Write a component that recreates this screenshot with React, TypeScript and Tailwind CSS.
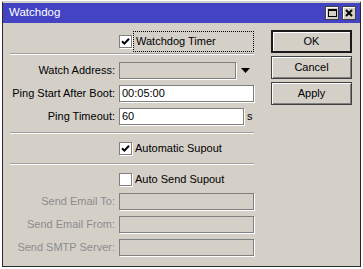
import React from "react";

const font = { fontFamily: '"Liberation Sans", Arial, sans-serif' };

function Check({ checked }: { checked: boolean }) {
  return (
    <div className="w-[13px] h-[13px] bg-white border border-[#808080] shadow-[1px_1px_0_#ffffff] flex items-center justify-center shrink-0">
      {checked && (
        <svg width="9" height="9" viewBox="0 0 9 9">
          <path d="M1 4.2 L3.4 6.6 L8 1.8" stroke="#000" strokeWidth="2" fill="none" />
        </svg>
      )}
    </div>
  );
}

function Separator({ className }: { className: string }) {
  return (
    <div className={"w-[244px] " + className}>
      <div className="h-px bg-[#a0a0a0]" />
      <div className="h-px bg-white" />
    </div>
  );
}

function Field({
  label,
  value,
  disabled,
  greyBox,
  className,
  boxWidth = "w-[135px]",
  after,
}: {
  label: string;
  value?: string;
  disabled?: boolean;
  greyBox?: boolean;
  className: string;
  boxWidth?: string;
  after?: React.ReactNode;
}) {
  return (
    <div className={"flex items-center h-[17px] " + className}>
      <div className={"w-[105px] text-right text-[11px] leading-none " + (disabled ? "text-[#8c8c8c]" : "text-black")}>
        {label}
      </div>
      <div className="w-[4px]" />
      <div
        className={
          boxWidth +
          " h-[17px] border border-[#808080] shadow-[1px_1px_0_#ffffff] flex items-center px-[2px] text-[11px] leading-none " +
          (disabled || greyBox ? "bg-[#d4d0c8]" : "bg-white")
        }
      >
        {value}
      </div>
      {after}
    </div>
  );
}

function Button({ label, primary, className }: { label: string; primary?: boolean; className: string }) {
  return (
    <div
      className={
        "w-[81px] h-[23px] flex items-center justify-center text-[11px] leading-none text-black bg-[#d4d0c8] " +
        (primary
          ? "border-2 border-[#1a1a1a] shadow-[inset_1px_1px_0_#ffffff]"
          : "border border-[#404040] shadow-[inset_1px_1px_0_#ffffff,inset_-1px_-1px_0_#808080]") +
        " " +
        className
      }
    >
      {label}
    </div>
  );
}

export default function App() {
  return (
    <div className="w-[363px] h-[269px] bg-white overflow-hidden" style={font}>
      <div className="ml-[2px] mt-[1px] w-[359px] h-[266px] bg-[#d4d0c8] border-x border-b border-[#2a2a2a] border-t-2 border-t-[#d4d0c8] flex flex-col">
        {/* title bar */}
        <div className="h-[20px] bg-[#4343c4] flex items-center pl-[6px] pr-[4px]">
          <span className="text-white text-[11.5px] leading-none">Watchdog</span>
          <div className="flex-1" />
          <div className="w-[14px] h-[14px] bg-[#d4d0c8] border border-[#404040] shadow-[inset_1px_1px_0_#ffffff] flex items-center justify-center">
            <div className="w-[9px] h-[8px] border border-black border-t-2" />
          </div>
          <div className="w-[3px]" />
          <div className="w-[14px] h-[14px] bg-[#d4d0c8] border border-[#404040] shadow-[inset_1px_1px_0_#ffffff] flex items-center justify-center">
            <svg width="8" height="8" viewBox="0 0 8 8">
              <path d="M1 1 L7 7 M7 1 L1 7" stroke="#000" strokeWidth="2" />
            </svg>
          </div>
        </div>

        {/* body */}
        <div className="flex pl-[7px]">
          <div className="w-[244px] flex flex-col">
            <div className="flex items-center h-[21px] mt-[8px]">
              <div className="w-[109px]" />
              <Check checked />
              <div className="flex-1 h-[21px] ml-[1px] border border-dotted border-black flex items-center pl-[2px] text-[11px] leading-none">
                Watchdog Timer
              </div>
            </div>
            <Separator className="mt-[1px]" />

            <Field
              label="Watch Address:"
              className="mt-[7px]"
              greyBox
              boxWidth="w-[117px]"
              after={
                <div className="flex-1 flex justify-center">
                  <svg width="9" height="5" viewBox="0 0 9 5">
                    <path d="M0 0 L9 0 L4.5 5 Z" fill="#000" />
                  </svg>
                </div>
              }
            />
            <Field label="Ping Start After Boot:" value="00:05:00" className="mt-[6px]" />
            <Field
              label="Ping Timeout:"
              value="60"
              className="mt-[6px]"
              boxWidth="w-[125px]"
              after={<span className="ml-[3px] text-[11px] leading-none">s</span>}
            />
            <Separator className="mt-[7px]" />

            <div className="flex items-center h-[13px] mt-[8px]">
              <div className="w-[109px]" />
              <Check checked />
              <span className="ml-[3px] text-[11px] leading-none">Automatic Supout</span>
            </div>
            <Separator className="mt-[8px]" />

            <div className="flex items-center h-[13px] mt-[8px]">
              <div className="w-[109px]" />
              <Check checked={false} />
              <span className="ml-[3px] text-[11px] leading-none">Auto Send Supout</span>
            </div>

            <Field label="Send Email To:" disabled className="mt-[7px]" />
            <Field label="Send Email From:" disabled className="mt-[6px]" />
            <Field label="Send SMTP Server:" disabled className="mt-[6px]" />
          </div>

          <div className="ml-[17px] flex flex-col">
            <Button label="OK" primary className="mt-[7px]" />
            <Button label="Cancel" className="mt-[3px]" />
            <Button label="Apply" className="mt-[3px]" />
          </div>
        </div>
      </div>
    </div>
  );
}
